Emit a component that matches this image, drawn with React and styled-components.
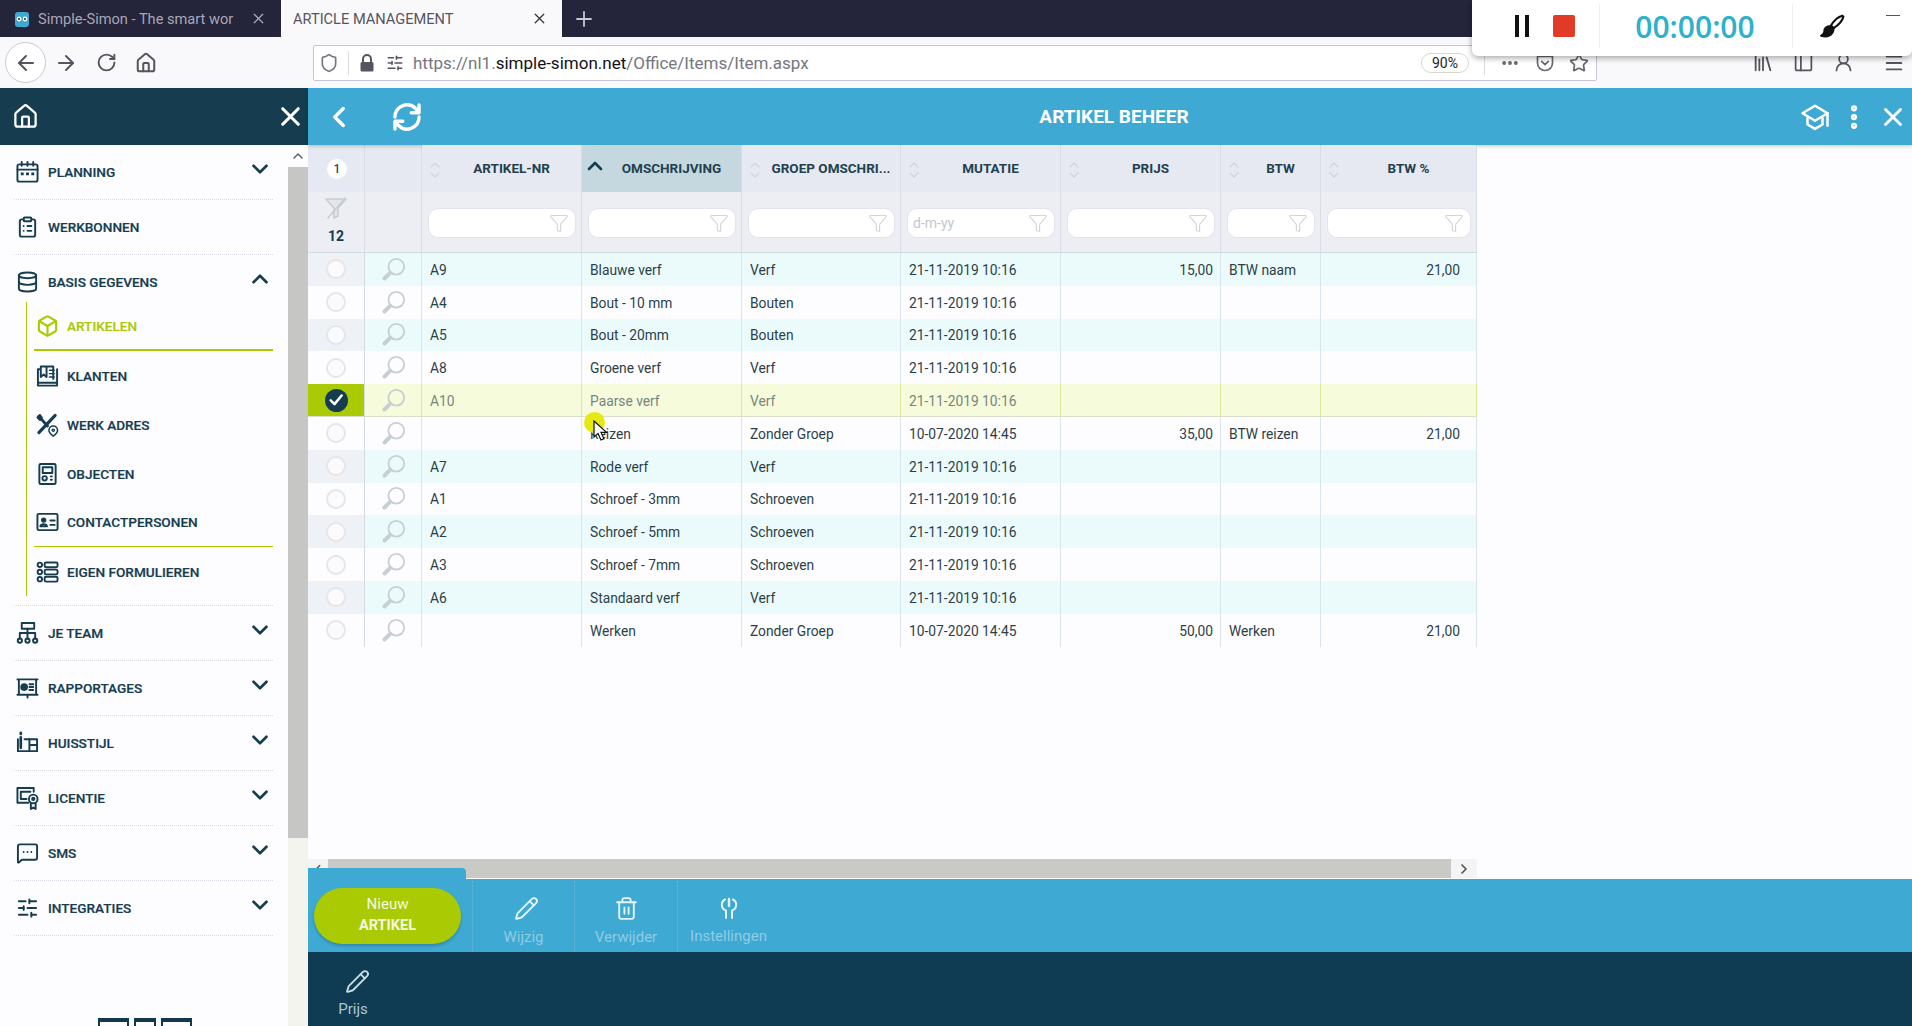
import React from 'react';
import styled, { createGlobalStyle } from 'styled-components';
import {
  ArrowLeft, ArrowRight, ChevronDown, ChevronLeft, ChevronRight, ChevronUp, EllipsisVertical, Ellipsis,
  House, Library, Menu, PanelLeft, Pencil, Plus, RotateCw, Shield, Star, Trash2, UserRound, X,
  Box, Database, MessageSquareMore, SlidersHorizontal, Funnel, ClipboardList,
} from 'lucide-react';

const NAVY = '#163c50';
const BLUE = '#3ea9d2';
const GREEN = '#aaca04';
const COLS = '57px 57px 160px 160px 159px 160px 160px 100px 156px';

const GlobalStyle = createGlobalStyle`
  html, body { margin: 0; padding: 0; height: 100%; background: #fdfdff; }
  body { font-family: Roboto, "Liberation Sans", sans-serif; overflow: hidden; }
  * { box-sizing: border-box; }
`;

const Page = styled.div`
  position: relative;
  height: 100vh;
  display: flex;
  flex-direction: column;
  overflow: hidden;
`;

/* browser chrome */
const TabBar = styled.div`
  height: 37px;
  background: #24243a;
  display: flex;
  align-items: stretch;
  flex: none;
`;
const Tab = styled.div`
  width: 281px;
  background: ${(p) => (p.$active ? '#f9f9fb' : 'transparent')};
  color: ${(p) => (p.$active ? '#55555f' : '#a8a8b8')};
  display: flex;
  align-items: center;
  padding: 0 14px 0 ${(p) => (p.$active ? '12px' : '14px')};
  font-size: 14.6px;
  gap: 8px;
  svg { flex: none; }
`;
const TabTitle = styled.span`
  flex: 1;
  overflow: hidden;
  white-space: nowrap;
`;
const NewTab = styled.div`
  width: 44px;
  color: #c8c8d4;
  display: flex;
  align-items: center;
  justify-content: center;
`;
const Toolbar = styled.div`
  height: 51px;
  flex: none;
  background: #f9f9fb;
  display: flex;
  align-items: center;
  padding-left: 5px;
  color: #55555f;
`;
const BackCircle = styled.div`
  width: 41px;
  height: 41px;
  border-radius: 50%;
  border: 1px solid #c9c9d6;
  background: #fff;
  display: flex;
  align-items: center;
  justify-content: center;
`;
const ToolBtn = styled.div`
  width: 40px;
  display: flex;
  justify-content: center;
`;
const UrlBar = styled.div`
  margin-left: 147px;
  width: 1284px;
  height: 36px;
  background: #fff;
  border: 1px solid #c6c6da;
  border-radius: 2px;
  display: flex;
  align-items: center;
  padding-left: 5px;
  font-size: 17px;
  color: #767680;
`;
const UrlDivider = styled.span`
  width: 1px;
  height: 24px;
  background: #dcdce4;
  margin: 0 ${(p) => p.$gap || 8}px;
`;
const UrlIcons = styled.div`
  display: flex;
  align-items: center;
  gap: 10px;
  margin-right: 9px;
  color: #55555f;
`;
const UrlText = styled.span`
  padding-top: 1px;
`;
const Host = styled.b`
  font-weight: 400;
  color: #111117;
`;
const ZoomPill = styled.span`
  margin-left: auto;
  width: 48px;
  height: 20px;
  border: 1px solid #d8d8c8;
  border-radius: 10px;
  font-size: 14px;
  color: #222;
  display: flex;
  align-items: center;
  justify-content: center;
`;
const PageActions = styled.div`
  width: 96px;
  padding-right: 7px;
  display: flex;
  align-items: center;
  justify-content: space-between;
  color: #66666e;
`;
const RightTools = styled.div`
  flex: 1;
  display: flex;
  align-items: center;
  padding-left: 155px;
  gap: 19px;
  color: #55555f;
`;

/* screen recorder overlay */
const Recorder = styled.div`
  position: absolute;
  left: 1472px;
  top: 0;
  width: 440px;
  height: 56px;
  padding-bottom: 4px;
  background: #fff;
  border-radius: 0 0 6px 6px;
  box-shadow: 0 2px 6px rgba(0, 0, 0, 0.35);
  display: flex;
  align-items: center;
  z-index: 5;
`;
const PauseBars = styled.span`
  margin-left: 43px;
  width: 14px;
  height: 22px;
  border-left: 4px solid #111;
  border-right: 4px solid #111;
`;
const StopSquare = styled.span`
  margin-left: 24px;
  width: 22px;
  height: 22px;
  border-radius: 2px;
  background: #e13a26;
`;
const RecDivider = styled.span`
  width: 1px;
  height: 44px;
  background: #eeeeee;
  margin-left: ${(p) => p.$left}px;
`;
const Timer = styled.span`
  width: 192px;
  padding-right: 2px;
  text-align: center;
  font-size: 30px;
  font-weight: 600;
  color: #2fb0cb;
  font-family: "Open Sans", Roboto, sans-serif;
`;
const BrushWrap = styled.span`
  margin-left: 26px;
  display: flex;
  color: #111;
`;
const MinLine = styled.span`
  position: absolute;
  right: 12px;
  top: 15px;
  width: 14px;
  height: 1px;
  background: #555;
`;

/* app */
const Body = styled.div`
  flex: 1;
  display: flex;
  min-height: 0;
`;
const Sidebar = styled.aside`
  width: 308px;
  flex: none;
  display: flex;
  flex-direction: column;
`;
const SideHead = styled.div`
  height: 57px;
  flex: none;
  background: ${NAVY};
  color: #fff;
  display: flex;
  align-items: center;
  justify-content: space-between;
  padding: 0 2px 0 12px;
`;
const SideBody = styled.div`
  flex: 1;
  display: flex;
  min-height: 0;
`;
const Nav = styled.nav`
  width: 288px;
  padding-right: 15px;
  position: relative;
  overflow: hidden;
`;
const NavRow = styled.div`
  height: 55px;
  margin-left: 14px;
  padding: 0 0 1px 2px;
  display: flex;
  align-items: center;
  gap: 9px;
  border-bottom: 1px dotted ${(p) => (p.$open ? 'transparent' : '#d9d9e6')};
  font-size: 13.6px;
  font-weight: 500;
  color: ${NAVY};
  -webkit-text-stroke: 0.2px ${NAVY};
`;
const NavLabel = styled.span`
  flex: 1;
`;
const Chevron = styled.span`
  display: flex;
  margin: -6px 0 0;
  color: ${NAVY};
`;
const IconBox = styled.span`
  width: 23px;
  height: 23px;
  flex: none;
  display: flex;
  align-items: center;
  justify-content: center;
`;
const Group = styled.div`
  margin-left: 14px;
  padding-bottom: 9px;
  border-bottom: 1px dotted #d9d9e6;
`;
const GroupRow = styled(NavRow)`
  margin-left: 0;
  margin-bottom: -8px;
`;
const SubList = styled.div`
  margin-left: 12px;
  border-left: 1px solid ${GREEN};
`;
const SubRow = styled.div`
  height: 49px;
  margin-left: 7px;
  display: flex;
  align-items: center;
  gap: 8px;
  padding-left: 2px;
  font-size: 13.6px;
  font-weight: 500;
  color: ${(p) => (p.$active ? GREEN : NAVY)};
  -webkit-text-stroke: 0.2px currentColor;
  border-bottom: ${(p) => p.$line || 0}px solid ${(p) => (p.$line ? GREEN : 'transparent')};
`;
const LogoPeek = styled.div`
  position: absolute;
  left: 98px;
  top: 873px;
  display: flex;
  gap: 5px;
`;
const LogoBlock = styled.span`
  width: ${(p) => p.$w}px;
  height: 20px;
  border: 2px solid #12384c;
  border-top-width: 4px;
`;
const VScroll = styled.div`
  width: 20px;
  background: #f4f4ee;
  display: flex;
  flex-direction: column;
  color: #555;
`;
const ScrollArrow = styled.div`
  height: 22px;
  flex: none;
  background: #fdfdff;
  display: flex;
  align-items: center;
  justify-content: center;
`;
const VThumb = styled.div`
  height: 671px;
  flex: none;
  background: #c6c6c4;
`;
const Main = styled.main`
  flex: 1;
  min-width: 0;
  display: flex;
  flex-direction: column;
`;
const TopBar = styled.header`
  height: 57px;
  flex: none;
  background: ${BLUE};
  color: #fff;
  display: flex;
  align-items: center;
  gap: 34px;
  box-shadow: 0 2px 3px rgba(0, 0, 0, 0.15);
  position: relative;
  padding: 0 4px 0 14px;
`;
const TopTitle = styled.h1`
  margin: 0;
  position: absolute;
  left: 731px;
  width: 150px;
  text-align: center;
  font-size: 19px;
  font-weight: 700;
  white-space: nowrap;
`;
const TopRight = styled.div`
  margin-left: auto;
  display: flex;
  align-items: center;
  gap: 9px;
`;
const Content = styled.div`
  flex: 1;
  min-height: 0;
  display: flex;
  flex-direction: column;
  justify-content: space-between;
  background: #fdfdff;
`;
const Table = styled.div`
  width: 1169px;
`;
const Row = styled.div`
  display: grid;
  grid-template-columns: ${COLS};
  height: ${(p) => p.$h}px;
`;
const HeadCell = styled.div`
  background: ${(p) => (p.$sorted ? '#c6d8df' : '#e6e9f1')};
  border-right: 1px solid #d9dde6;
  display: flex;
  align-items: center;
  justify-content: center;
  padding: 0 0 2px 20px;
  position: relative;
  font-size: 13.5px;
  font-weight: 700;
  color: #1f4150;
  white-space: nowrap;
`;
const SortMark = styled.span`
  position: absolute;
  left: ${(p) => (p.$on ? 1 : 5)}px;
  top: ${(p) => (p.$on ? 9 : 12)}px;
  color: ${(p) => (p.$on ? NAVY : '#cfd3dd')};
  display: flex;
  flex-direction: column;
  align-items: center;
  gap: 0;
  svg + svg { margin-top: -6px; }
`;
const CountBadge = styled.span`
  width: 20px;
  height: 20px;
  margin-left: 2px;
  border-radius: 50%;
  background: #fff;
  font-size: 12px;
  font-weight: 500;
  color: #2e4c5a;
  display: flex;
  align-items: center;
  justify-content: center;
`;
const HeadBlank = styled.div`
  background: #e6e9f1;
  border-right: 1px solid #d9dde6;
  display: flex;
  align-items: center;
  justify-content: center;
`;
const FilterCell = styled.div`
  background: #eceef4;
  border-right: 1px solid #d9dde6;
  border-bottom: 1px solid #cfdbe3;
  padding: 16px 5px 13px 6px;
`;
const FilterCount = styled(FilterCell)`
  padding: 4px 0 0;
  display: flex;
  flex-direction: column;
  align-items: center;
  gap: 8px;
  font-size: 14px;
  font-weight: 700;
  color: ${NAVY};
`;
const FilterBox = styled.div`
  height: 30px;
  background: #fff;
  border: 1px solid #e3e4ee;
  border-radius: 10px;
  display: flex;
  align-items: center;
  justify-content: space-between;
  padding: 0 6px 0 5px;
  font-size: 14px;
  color: #c4c8cc;
`;
const Cell = styled.div`
  background: ${(p) => (p.$sel ? '#f6fbdc' : p.$odd ? '#ebfbfc' : '#fdfdff')};
  border-right: 1px solid ${(p) => (p.$sel ? '#dfe89a' : '#d8e5ec')};
  border-bottom: ${(p) => (p.$sel ? '1px solid #dcdccb' : '0')};
  display: flex;
  align-items: center;
  justify-content: ${(p) => (p.$right ? 'flex-end' : 'flex-start')};
  padding: ${(p) => (p.$right ? `1px ${p.$right}px 0 0` : '1px 0 0 8px')};
  font-size: 13.8px;
  color: ${(p) => (p.$sel ? '#76867f' : '#2c3f49')};
  white-space: nowrap;
`;
const RadioCell = styled(Cell)`
  justify-content: center;
  padding: 0;
  background: ${(p) => (p.$sel ? GREEN : p.$odd ? '#eef1f5' : '#fdfdff')};
  border-right-color: #d5dbe5;
`;
const IconCell = styled(Cell)`
  justify-content: center;
  padding: 0;
  color: #c6cfd3;
`;
const Radio = styled.span`
  width: 20px;
  height: 20px;
  border-radius: 50%;
  border: 2px solid #e4e6ea;
  background: #fbfbfd;
`;
const Checked = styled.span`
  width: 23px;
  height: 23px;
  border-radius: 50%;
  background: ${NAVY};
  color: #fff;
  display: flex;
  align-items: center;
  justify-content: center;
`;
const HScroll = styled.div`
  width: 1169px;
  height: 19px;
  margin-bottom: 1px;
  display: flex;
  color: #555;
`;
const HArrow = styled.div`
  width: ${(p) => p.$w}px;
  display: flex;
  align-items: center;
  justify-content: center;
  background: #f4f4f4;
`;
const HThumb = styled.div`
  flex: 1;
  background: #c9c9c6;
`;
const ActionBar = styled.div`
  height: 73px;
  flex: none;
  background: ${BLUE};
  position: relative;
  display: flex;
  align-items: center;
  padding-left: 6px;
  &::before {
    content: '';
    position: absolute;
    left: 0;
    top: -11px;
    width: 158px;
    height: 11px;
    background: ${BLUE};
    border-radius: 0 4px 0 0;
  }
`;
const NewButton = styled.div`
  width: 147px;
  height: 56px;
  border-radius: 28px;
  background: ${GREEN};
  color: #f4f8e0;
  box-shadow: 0 2px 3px rgba(0, 0, 0, 0.2);
  display: flex;
  flex-direction: column;
  align-items: center;
  justify-content: center;
  gap: 2px;
  padding-bottom: 2px;
  font-size: 15px;
  line-height: 19px;
  margin-right: 11px;
  strong { font-size: 14.5px; }
`;
const ActionItem = styled.div`
  width: ${(p) => p.$w}px;
  height: 70px;
  display: flex;
  flex-direction: column;
  align-items: center;
  justify-content: flex-start;
  padding-top: 15px;
  gap: 7px;
  border-left: 1px dotted rgba(255, 255, 255, 0.2);
  font-size: 15px;
  color: rgba(255, 255, 255, 0.42);
  svg { color: #e6f4fa; }
`;
const OffsetPencil = styled(Pencil)`
  margin-left: 6px;
`;
const DarkBar = styled.div`
  height: 74px;
  flex: none;
  background: #0f3c52;
  padding: 17px 0 0 22px;
`;
const DarkItem = styled.div`
  width: 46px;
  display: flex;
  flex-direction: column;
  align-items: center;
  gap: 6px;
  font-size: 15px;
  color: #a9c6d4;
  svg { margin-left: 8px; color: #c8dce6; }
`;
const CursorSpot = styled.div`
  position: absolute;
  left: 584px;
  top: 412px;
  width: 21px;
  height: 21px;
  border-radius: 50%;
  background: #e7ea12;
  z-index: 4;
`;
const CursorArrow = styled.svg`
  position: absolute;
  left: 593px;
  top: 420px;
  z-index: 5;
`;

const Svg = ({ size = 24, sw = 2, children, ...rest }) => (
  <svg width={size} height={size} viewBox="0 0 24 24" fill="none" stroke="currentColor" strokeWidth={sw} strokeLinecap="round" strokeLinejoin="round" {...rest}>
    {children}
  </svg>
);

const CalendarIco = () => (
  <Svg>
    <rect x="1.500" y="4" width="21" height="18" rx="2" />
    <path d="M1.500 9.500h21M6 1.500v4M12 1.500v4M18 1.500v4" />
    <path d="M5 14h3M10.500 14h3M16 14h3" strokeWidth="3" strokeLinecap="butt" />
  </Svg>
);
const BookIco = () => (
  <Svg>
    <path d="M4 5H2v17h20V5M2 19h20" />
    <path d="M5 2h6v11l-3-2.500L5 13zM11 2h7v13" />
    <path d="M14 6h5M14 9.500h5M14 13h5" strokeWidth="1.500" />
  </Svg>
);
const WerkIco = () => (
  <Svg>
    <path d="M3 3l9 10" strokeWidth="3" />
    <path d="M4 1.500 1.500 4l2 2.500h2.500V4z" fill="currentColor" />
    <path d="M20 2 3 20" strokeWidth="3.200" />
    <path d="M18 13a4.500 4.500 0 0 1 4.500 4.500c0 2.800-4.500 6-4.500 6s-4.500-3.200-4.500-6A4.500 4.500 0 0 1 18 13z" fill="#fdfdff" strokeWidth="1.600" />
    <circle cx="18" cy="17.500" r="1.200" strokeWidth="1.400" />
  </Svg>
);
const ObjectIco = () => (
  <Svg>
    <rect x="3.500" y="1.500" width="17" height="21" rx="1.500" />
    <rect x="7" y="5" width="10" height="6" />
    <circle cx="9" cy="16.500" r="2.300" />
    <path d="M15.500 14.500h1M15.500 18h1" />
  </Svg>
);
const ContactIco = () => (
  <Svg>
    <rect x="1.500" y="3.500" width="21" height="17" rx="1.500" />
    <circle cx="8" cy="10" r="1.800" fill="currentColor" />
    <path d="M4.500 16.500c.5-3 6.500-3 7 0zM15 10.500h4.500M15 15h4.500" />
  </Svg>
);
const FormsIco = () => (
  <Svg>
    <circle cx="4" cy="4.500" r="2.300" />
    <circle cx="4" cy="12" r="2.300" />
    <circle cx="4" cy="19.500" r="2.300" />
    <rect x="9" y="2" width="13.500" height="5" rx="1.500" />
    <rect x="9" y="9.500" width="13.500" height="5" rx="1.500" />
    <rect x="9" y="17" width="13.500" height="5" rx="1.500" />
  </Svg>
);
const TeamIco = () => (
  <Svg>
    <rect x="6" y="1.500" width="13" height="6" />
    <path d="M12 7.500V12M4 18v-6h16v6M12 12v6" />
    <circle cx="4" cy="20" r="2.200" />
    <circle cx="12" cy="20" r="2.200" />
    <circle cx="20" cy="20" r="2.200" />
  </Svg>
);
const ReportIco = () => (
  <Svg>
    <path d="M1.500 3h21M1.500 19h21M3 3v16M21 3v16M12 19v3" />
    <circle cx="8.500" cy="11" r="3" fill="currentColor" />
    <path d="M14 8h4M14 11h4M14 14h4" />
  </Svg>
);
const StyleIco = () => (
  <Svg>
    <path d="M5 1.500v1M5 6v11" strokeWidth="2.800" />
    <path d="M2 8v12.500h20V8H9" />
    <path d="M14 8v12M14 14h8" />
  </Svg>
);
const LicenseIco = () => (
  <Svg>
    <path d="M13 17H1.500V1.500h17v4" />
    <path d="M5 5.500h10M5 5.500V13h6" />
    <circle cx="18" cy="13" r="4.500" />
    <circle cx="18" cy="13" r="1.200" fill="currentColor" />
    <path d="M15.500 18v5.500l2.500-1.500 2.500 1.500V18" />
  </Svg>
);
const RefreshIco = () => (
  <Svg size={34} sw={2.400}>
    <path d="M3.500 12a8.500 8.500 0 0 1 14.500-6l2 2.500" />
    <path d="M20.500 3.500v5.500H15" />
    <path d="M20.500 12a8.500 8.500 0 0 1-14.500 6l-2-2.500" />
    <path d="M3.500 20.500V15H9" />
  </Svg>
);
const CapIco = () => (
  <Svg size={30} sw={2}>
    <path d="M2 9 12 3l10 6-10 6z" />
    <path d="M6 13v5l6 3.500 6-3.500v-5" />
    <path d="M22 9v10" />
  </Svg>
);
const WrenchIco = () => (
  <Svg size={24}>
    <path d="M8 3.500a6 6 0 0 0 1 11V22M16 3.500a6 6 0 0 1-1 11V22" />
    <path d="M12 3v7" strokeWidth="2.400" />
  </Svg>
);
const LensIco = () => (
  <Svg size={27} sw={1.600}>
    <circle cx="14.500" cy="9.500" r="7" />
    <path d="m9 15-5 5" strokeWidth="3.500" />
  </Svg>
);
const CheckIco = () => (
  <Svg size={18} sw={3.400}>
    <path d="m5 12.500 5 5L19.500 6" />
  </Svg>
);
const SlashFunnel = () => (
  <Svg size={24} sw={1.500} color="#c6ccd3">
    <path d="M2 3h20l-8 9v8l-4 2v-10z" fill="#e3e6ea" />
    <path d="M21 2 4 22" />
  </Svg>
);
const LockIco = () => (
  <svg width="18" height="20" viewBox="0 0 18 20">
    <path d="M5 9V6a4 4 0 0 1 8 0v3" fill="none" stroke="currentColor" strokeWidth="2" />
    <rect x="2.500" y="9" width="13" height="9.500" rx="1.500" fill="currentColor" />
  </svg>
);
const PocketIco = () => (
  <Svg size={20} sw={2}>
    <path d="M3 4h18v8a9 9 0 0 1-18 0z" />
    <path d="m8 10 4 4 4-4" />
  </Svg>
);
const BrushIco = () => (
  <Svg size={26} sw={2}>
    <path d="M21.500 2.500c-4 1-8 5-10.500 9l2.500 2.500c4-2.500 8-6.500 9-10.500z" />
    <path d="M11 12c-4 0-6 2-6 5 0 1.500-1 3-3 4 5 1.500 11 .5 11.500-7z" fill="currentColor" />
  </Svg>
);
const FilterIco = () => <Funnel size={20} strokeWidth={1.400} color="#d2d6dc" />;

const columns = ['ARTIKEL-NR', 'OMSCHRIJVING', 'GROEP OMSCHRI...', 'MUTATIE', 'PRIJS', 'BTW', 'BTW %'];

const rows = [
  ['A9', 'Blauwe verf', 'Verf', '21-11-2019 10:16', '15,00', 'BTW naam', '21,00'],
  ['A4', 'Bout - 10 mm', 'Bouten', '21-11-2019 10:16'],
  ['A5', 'Bout - 20mm', 'Bouten', '21-11-2019 10:16'],
  ['A8', 'Groene verf', 'Verf', '21-11-2019 10:16'],
  ['A10', 'Paarse verf', 'Verf', '21-11-2019 10:16'],
  ['', 'Reizen', 'Zonder Groep', '10-07-2020 14:45', '35,00', 'BTW reizen', '21,00'],
  ['A7', 'Rode verf', 'Verf', '21-11-2019 10:16'],
  ['A1', 'Schroef - 3mm', 'Schroeven', '21-11-2019 10:16'],
  ['A2', 'Schroef - 5mm', 'Schroeven', '21-11-2019 10:16'],
  ['A3', 'Schroef - 7mm', 'Schroeven', '21-11-2019 10:16'],
  ['A6', 'Standaard verf', 'Verf', '21-11-2019 10:16'],
  ['', 'Werken', 'Zonder Groep', '10-07-2020 14:45', '50,00', 'Werken', '21,00'],
];

const DownChevron = () => (
  <Chevron><ChevronDown size={26} strokeWidth={2.400} /></Chevron>
);

const MenuRow = ({ icon, label, chevron = true }) => (
  <NavRow>
    <IconBox>{icon}</IconBox>
    <NavLabel>{label}</NavLabel>
    {chevron && <DownChevron />}
  </NavRow>
);

const App = () => {
  return (
    <Page>
      <GlobalStyle />
      <TabBar>
        <Tab>
          <svg width="16" height="20" viewBox="0 0 16 20">
            <rect x="1" y="3" width="14" height="15" rx="3" fill="#3ea9d2" />
            <circle cx="5" cy="10" r="2.400" fill="#fff" />
            <circle cx="11" cy="10" r="2.400" fill="#fff" />
            <circle cx="5" cy="10" r="1" fill="#123" />
            <circle cx="11" cy="10" r="1" fill="#123" />
          </svg>
          <TabTitle>Simple-Simon - The smart wor</TabTitle>
          <X size={17} strokeWidth={1.800} />
        </Tab>
        <Tab $active>
          <TabTitle>ARTICLE MANAGEMENT</TabTitle>
          <X size={17} strokeWidth={1.800} color="#333" />
        </Tab>
        <NewTab><Plus size={24} strokeWidth={1.800} /></NewTab>
      </TabBar>
      <Toolbar>
        <BackCircle><ArrowLeft size={24} strokeWidth={2} /></BackCircle>
        <ToolBtn><ArrowRight size={24} strokeWidth={2} /></ToolBtn>
        <ToolBtn><RotateCw size={21} strokeWidth={2.200} /></ToolBtn>
        <ToolBtn><House size={22} strokeWidth={2.200} /></ToolBtn>
        <UrlBar>
          <Shield size={20} strokeWidth={2} />
          <UrlDivider $gap={9} />
          <UrlIcons>
            <LockIco />
            <SlidersHorizontal size={18} strokeWidth={2} />
          </UrlIcons>
          <UrlText>https://nl1.<Host>simple-simon.net</Host>/Office/Items/Item.aspx</UrlText>
          <ZoomPill>90%</ZoomPill>
          <UrlDivider $gap={15} />
          <PageActions>
            <Ellipsis size={20} strokeWidth={2.600} />
            <PocketIco />
            <Star size={20} strokeWidth={2} />
          </PageActions>
        </UrlBar>
        <RightTools>
          <Library size={22} strokeWidth={2} />
          <PanelLeft size={21} strokeWidth={2} />
          <UserRound size={21} strokeWidth={2} />
          <Menu size={22} strokeWidth={2} style={{ marginLeft: 10 }} />
        </RightTools>
      </Toolbar>
      <Recorder>
        <PauseBars />
        <StopSquare />
        <RecDivider $left={24} />
        <Timer>00:00:00</Timer>
        <RecDivider $left={0} />
        <BrushWrap><BrushIco /></BrushWrap>
        <MinLine />
      </Recorder>
      <Body>
        <Sidebar>
          <SideHead>
            <House size={27} strokeWidth={2} />
            <X size={31} strokeWidth={2.400} />
          </SideHead>
          <SideBody>
            <Nav>
              <MenuRow icon={<CalendarIco />} label="PLANNING" />
              <MenuRow icon={<ClipboardList size={24} strokeWidth={2} />} label="WERKBONNEN" chevron={false} />
              <Group>
                <GroupRow $open>
                  <IconBox><Database size={24} strokeWidth={2} /></IconBox>
                  <NavLabel>BASIS GEGEVENS</NavLabel>
                  <Chevron><ChevronUp size={26} strokeWidth={2.400} /></Chevron>
                </GroupRow>
                <SubList>
                  <SubRow $active $line={2}><IconBox><Box size={24} strokeWidth={2.200} /></IconBox>ARTIKELEN</SubRow>
                  <SubRow><IconBox><BookIco /></IconBox>KLANTEN</SubRow>
                  <SubRow><IconBox><WerkIco /></IconBox>WERK ADRES</SubRow>
                  <SubRow><IconBox><ObjectIco /></IconBox>OBJECTEN</SubRow>
                  <SubRow $line={1}><IconBox><ContactIco /></IconBox>CONTACTPERSONEN</SubRow>
                  <SubRow><IconBox><FormsIco /></IconBox>EIGEN FORMULIEREN</SubRow>
                </SubList>
              </Group>
              <MenuRow icon={<TeamIco />} label="JE TEAM" />
              <MenuRow icon={<ReportIco />} label="RAPPORTAGES" />
              <MenuRow icon={<StyleIco />} label="HUISSTIJL" />
              <MenuRow icon={<LicenseIco />} label="LICENTIE" />
              <MenuRow icon={<MessageSquareMore size={24} strokeWidth={2} />} label="SMS" />
              <MenuRow icon={<SlidersHorizontal size={24} strokeWidth={2} />} label="INTEGRATIES" />
              <LogoPeek>
                <LogoBlock $w={31} />
                <LogoBlock $w={22} />
                <LogoBlock $w={31} />
              </LogoPeek>
            </Nav>
            <VScroll>
              <ScrollArrow><ChevronUp size={16} strokeWidth={2} /></ScrollArrow>
              <VThumb />
            </VScroll>
          </SideBody>
        </Sidebar>
        <Main>
          <TopBar>
            <ChevronLeft size={34} strokeWidth={2.400} />
            <RefreshIco />
            <TopTitle>ARTIKEL BEHEER</TopTitle>
            <TopRight>
              <CapIco />
              <EllipsisVertical size={30} strokeWidth={3} />
              <X size={30} strokeWidth={2.200} />
            </TopRight>
          </TopBar>
          <Content>
            <Table>
              <Row $h={47}>
                <HeadBlank><CountBadge>1</CountBadge></HeadBlank>
                <HeadBlank />
                {columns.map((name) => {
                  const sorted = name === 'OMSCHRIJVING';
                  return (
                    <HeadCell key={name} $sorted={sorted}>
                      <SortMark $on={sorted}>
                        {sorted ? (
                          <ChevronUp size={24} strokeWidth={2.600} />
                        ) : (
                          <>
                            <ChevronUp size={16} strokeWidth={1.600} />
                            <ChevronDown size={16} strokeWidth={1.600} />
                          </>
                        )}
                      </SortMark>
                      {name}
                    </HeadCell>
                  );
                })}
              </Row>
              <Row $h={61}>
                <FilterCount><SlashFunnel />12</FilterCount>
                <FilterCell />
                {columns.map((name) => (
                  <FilterCell key={name}>
                    <FilterBox>
                      <span>{name === 'MUTATIE' ? 'd-m-yy' : ''}</span>
                      <FilterIco />
                    </FilterBox>
                  </FilterCell>
                ))}
              </Row>
              {rows.map((r, i) => {
                const odd = i % 2 === 0;
                const sel = r[0] === 'A10';
                return (
                  <Row $h={32.8} key={r[1]}>
                    <RadioCell $odd={odd} $sel={sel}>
                      {sel ? <Checked><CheckIco /></Checked> : <Radio />}
                    </RadioCell>
                    <IconCell $odd={odd} $sel={sel}><LensIco /></IconCell>
                    <Cell $odd={odd} $sel={sel}>{r[0]}</Cell>
                    <Cell $odd={odd} $sel={sel}>{r[1]}</Cell>
                    <Cell $odd={odd} $sel={sel}>{r[2]}</Cell>
                    <Cell $odd={odd} $sel={sel}>{r[3]}</Cell>
                    <Cell $odd={odd} $sel={sel} $right={7}>{r[4]}</Cell>
                    <Cell $odd={odd} $sel={sel}>{r[5]}</Cell>
                    <Cell $odd={odd} $sel={sel} $right={16}>{r[6]}</Cell>
                  </Row>
                );
              })}
            </Table>
            <HScroll>
              <HArrow $w={20}><ChevronLeft size={14} strokeWidth={2.400} /></HArrow>
              <HThumb />
              <HArrow $w={26}><ChevronRight size={16} strokeWidth={2.600} /></HArrow>
            </HScroll>
          </Content>
          <ActionBar>
            <NewButton>Nieuw<strong>ARTIKEL</strong></NewButton>
            <ActionItem $w={102}><OffsetPencil size={25} strokeWidth={1.800} />Wijzig</ActionItem>
            <ActionItem $w={103}><Trash2 size={25} strokeWidth={1.800} />Verwijder</ActionItem>
            <ActionItem $w={102}><WrenchIco />Instellingen</ActionItem>
          </ActionBar>
          <DarkBar>
            <DarkItem><Pencil size={25} strokeWidth={1.800} />Prijs</DarkItem>
          </DarkBar>
        </Main>
      </Body>
      <CursorSpot />
      <CursorArrow width="16" height="22" viewBox="0 0 16 22">
        <path d="M1 1v16l4-3.500 3 6.500 3-1.300-3-6.300h5.500z" fill="#fff" stroke="#111" strokeWidth="1.200" />
      </CursorArrow>
    </Page>
  );
};

export default App;
